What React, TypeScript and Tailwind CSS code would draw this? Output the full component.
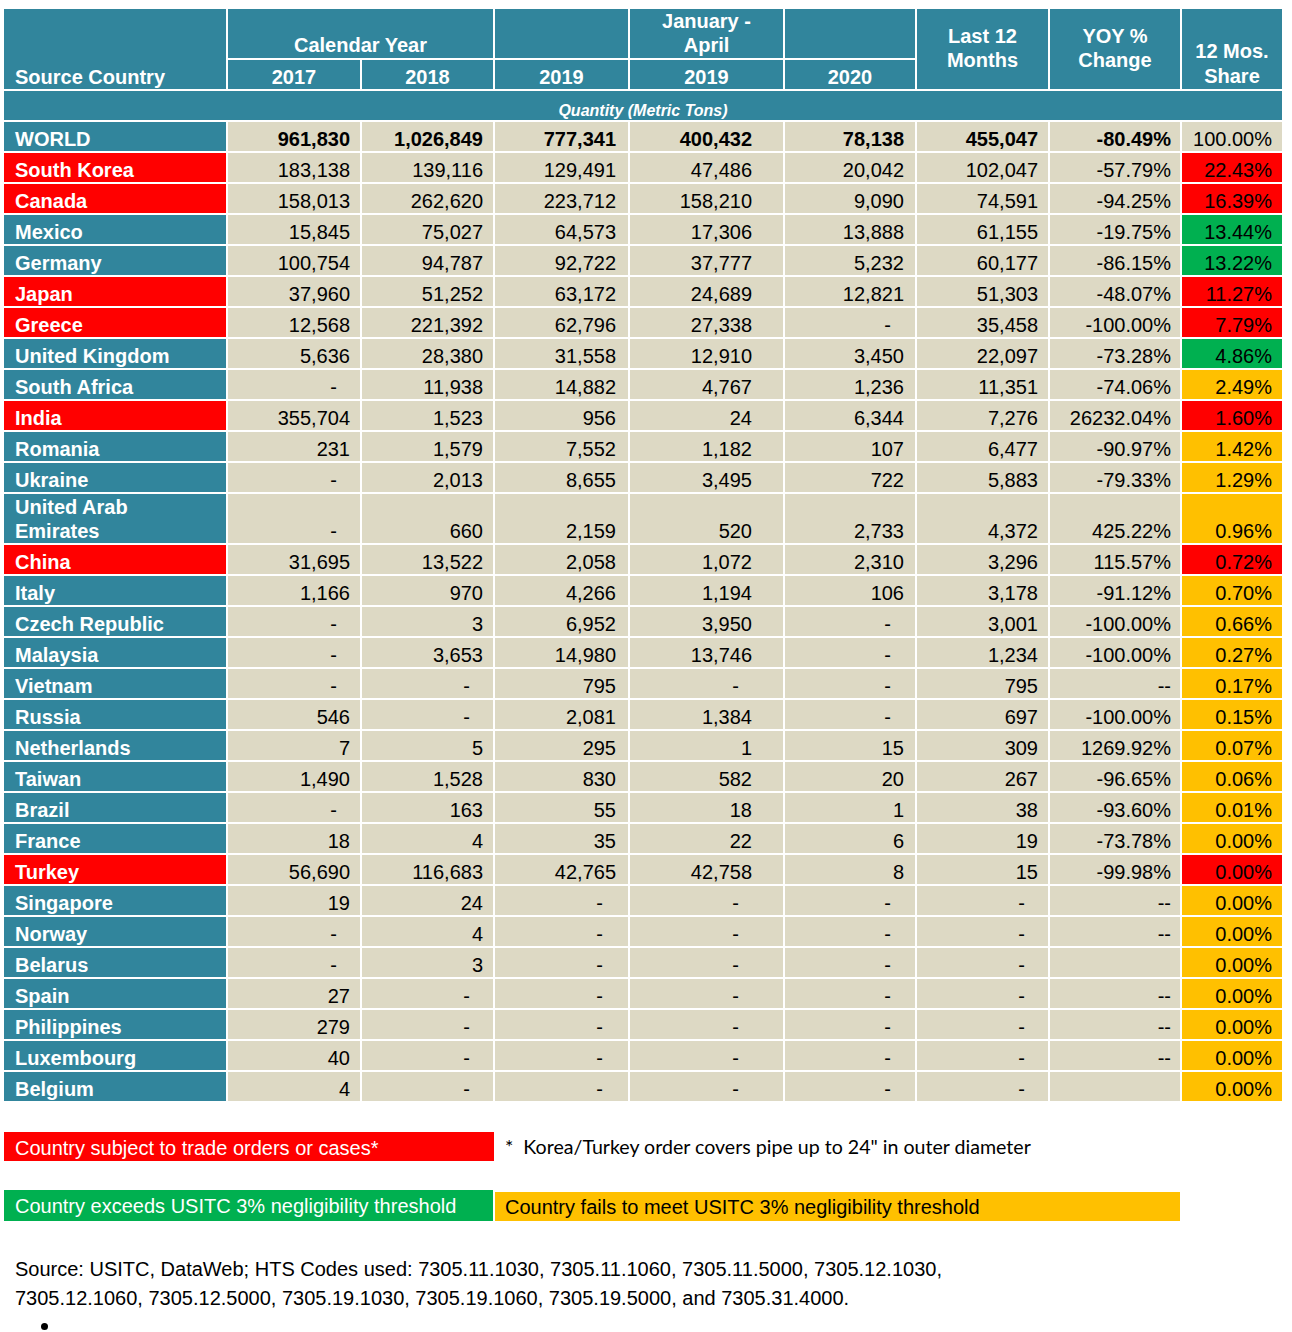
type ShareColor = 'red' | 'green' | 'orange' | 'none';

interface Row {
  name: string;
  red?: boolean;
  vals: string[];
  share: string;
  shareColor: ShareColor;
  tall?: boolean;
  bold?: boolean;
}

const rows: Row[] = [
  { name: 'WORLD', bold: true, vals: ['961,830', '1,026,849', '777,341', '400,432', '78,138', '455,047', '-80.49%'], share: '100.00%', shareColor: 'none' },
  { name: 'South Korea', red: true, vals: ['183,138', '139,116', '129,491', '47,486', '20,042', '102,047', '-57.79%'], share: '22.43%', shareColor: 'red' },
  { name: 'Canada', red: true, vals: ['158,013', '262,620', '223,712', '158,210', '9,090', '74,591', '-94.25%'], share: '16.39%', shareColor: 'red' },
  { name: 'Mexico', vals: ['15,845', '75,027', '64,573', '17,306', '13,888', '61,155', '-19.75%'], share: '13.44%', shareColor: 'green' },
  { name: 'Germany', vals: ['100,754', '94,787', '92,722', '37,777', '5,232', '60,177', '-86.15%'], share: '13.22%', shareColor: 'green' },
  { name: 'Japan', red: true, vals: ['37,960', '51,252', '63,172', '24,689', '12,821', '51,303', '-48.07%'], share: '11.27%', shareColor: 'red' },
  { name: 'Greece', red: true, vals: ['12,568', '221,392', '62,796', '27,338', '-', '35,458', '-100.00%'], share: '7.79%', shareColor: 'red' },
  { name: 'United Kingdom', vals: ['5,636', '28,380', '31,558', '12,910', '3,450', '22,097', '-73.28%'], share: '4.86%', shareColor: 'green' },
  { name: 'South Africa', vals: ['-', '11,938', '14,882', '4,767', '1,236', '11,351', '-74.06%'], share: '2.49%', shareColor: 'orange' },
  { name: 'India', red: true, vals: ['355,704', '1,523', '956', '24', '6,344', '7,276', '26232.04%'], share: '1.60%', shareColor: 'red' },
  { name: 'Romania', vals: ['231', '1,579', '7,552', '1,182', '107', '6,477', '-90.97%'], share: '1.42%', shareColor: 'orange' },
  { name: 'Ukraine', vals: ['-', '2,013', '8,655', '3,495', '722', '5,883', '-79.33%'], share: '1.29%', shareColor: 'orange' },
  { name: 'United Arab|Emirates', tall: true, vals: ['-', '660', '2,159', '520', '2,733', '4,372', '425.22%'], share: '0.96%', shareColor: 'orange' },
  { name: 'China', red: true, vals: ['31,695', '13,522', '2,058', '1,072', '2,310', '3,296', '115.57%'], share: '0.72%', shareColor: 'red' },
  { name: 'Italy', vals: ['1,166', '970', '4,266', '1,194', '106', '3,178', '-91.12%'], share: '0.70%', shareColor: 'orange' },
  { name: 'Czech Republic', vals: ['-', '3', '6,952', '3,950', '-', '3,001', '-100.00%'], share: '0.66%', shareColor: 'orange' },
  { name: 'Malaysia', vals: ['-', '3,653', '14,980', '13,746', '-', '1,234', '-100.00%'], share: '0.27%', shareColor: 'orange' },
  { name: 'Vietnam', vals: ['-', '-', '795', '-', '-', '795', '--'], share: '0.17%', shareColor: 'orange' },
  { name: 'Russia', vals: ['546', '-', '2,081', '1,384', '-', '697', '-100.00%'], share: '0.15%', shareColor: 'orange' },
  { name: 'Netherlands', vals: ['7', '5', '295', '1', '15', '309', '1269.92%'], share: '0.07%', shareColor: 'orange' },
  { name: 'Taiwan', vals: ['1,490', '1,528', '830', '582', '20', '267', '-96.65%'], share: '0.06%', shareColor: 'orange' },
  { name: 'Brazil', vals: ['-', '163', '55', '18', '1', '38', '-93.60%'], share: '0.01%', shareColor: 'orange' },
  { name: 'France', vals: ['18', '4', '35', '22', '6', '19', '-73.78%'], share: '0.00%', shareColor: 'orange' },
  { name: 'Turkey', red: true, vals: ['56,690', '116,683', '42,765', '42,758', '8', '15', '-99.98%'], share: '0.00%', shareColor: 'red' },
  { name: 'Singapore', vals: ['19', '24', '-', '-', '-', '-', '--'], share: '0.00%', shareColor: 'orange' },
  { name: 'Norway', vals: ['-', '4', '-', '-', '-', '-', '--'], share: '0.00%', shareColor: 'orange' },
  { name: 'Belarus', vals: ['-', '3', '-', '-', '-', '-', ''], share: '0.00%', shareColor: 'orange' },
  { name: 'Spain', vals: ['27', '-', '-', '-', '-', '-', '--'], share: '0.00%', shareColor: 'orange' },
  { name: 'Philippines', vals: ['279', '-', '-', '-', '-', '-', '--'], share: '0.00%', shareColor: 'orange' },
  { name: 'Luxembourg', vals: ['40', '-', '-', '-', '-', '-', '--'], share: '0.00%', shareColor: 'orange' },
  { name: 'Belgium', vals: ['4', '-', '-', '-', '-', '-', ''], share: '0.00%', shareColor: 'orange' },
];

// right padding per value column, taken from the sheet
const padRight = ['pr-[10px]', 'pr-[10px]', 'pr-[12px]', 'pr-[31px]', 'pr-[11px]', 'pr-[10px]', 'pr-[9px]'];

const shareBg: Record<ShareColor, string> = {
  red: 'bg-[#ff0000]',
  green: 'bg-[#00b050]',
  orange: 'bg-[#ffc000]',
  none: 'bg-[#ddd9c4]',
};

const teal = 'bg-[#31859c]';

function Value({ v }: { v: string }) {
  if (v === '-') return <span className="mr-[13px]">-</span>;
  return <span>{v}</span>;
}

function DataRow({ row }: { row: Row }) {
  const h = row.tall ? 'h-[49px]' : 'h-[29px]';
  const lines = row.name.split('|');
  return (
    <>
      <div
        className={`${h} ${row.red ? 'bg-[#ff0000]' : teal} flex items-end pl-[11px] font-bold text-white ${
          row.tall ? 'leading-[24px] pb-0' : 'leading-[20px] pb-[2px]'
        }`}
      >
        <div>
          {lines.map((l, i) => (
            <div key={i}>{l}</div>
          ))}
        </div>
      </div>
      {row.vals.map((v, i) => (
        <div
          key={i}
          className={`${h} bg-[#ddd9c4] flex items-end justify-end pb-[2px] leading-[20px] text-black ${padRight[i]} ${
            row.bold ? 'font-bold' : ''
          }`}
        >
          <Value v={v} />
        </div>
      ))}
      <div className={`${h} ${shareBg[row.shareColor]} flex items-end justify-end pr-[10px] pb-[2px] leading-[20px] text-black`}>
        {row.share}
      </div>
    </>
  );
}

export default function App() {
  return (
    <div className="bg-white w-[1292px] min-h-[1332px] pt-[9px] pl-[4px] font-['Liberation_Sans',Arial,sans-serif] text-[20px]">
      <div className="grid grid-cols-[222px_132px_131px_133px_153px_130px_131px_130px_100px] grid-rows-[49px_29px] gap-[2px] w-[1278px]">
        <div className={`${teal} row-span-2 flex items-end pl-[11px] pb-[2px] leading-[20px] font-bold text-white`}>
          Source Country
        </div>
        <div className={`${teal} col-span-2 flex items-end justify-center pb-[3px] leading-[20px] font-bold text-white`}>
          Calendar Year
        </div>
        <div className={teal} />
        <div className={`${teal} flex items-end justify-center pb-[1px] leading-[24px] font-bold text-white text-center`}>
          <div>
            January -
            <br />
            April
          </div>
        </div>
        <div className={teal} />
        <div className={`${teal} row-span-2 flex items-center justify-center pb-[2px] leading-[24px] font-bold text-white text-center`}>
          <div>
            Last 12
            <br />
            Months
          </div>
        </div>
        <div className={`${teal} row-span-2 flex items-center justify-center pb-[2px] leading-[24px] font-bold text-white text-center`}>
          <div>
            YOY %
            <br />
            Change
          </div>
        </div>
        <div className={`${teal} row-span-2 flex items-end justify-center pb-0 leading-[25px] font-bold text-white text-center`}>
          <div>
            12 Mos.
            <br />
            Share
          </div>
        </div>
        {['2017', '2018', '2019', '2019', '2020'].map((y, i) => (
          <div key={i} className={`${teal} flex items-end justify-center pb-[2px] leading-[20px] font-bold text-white`}>
            {y}
          </div>
        ))}
        <div className={`${teal} col-span-9 h-[29px] flex items-end justify-center pb-0 leading-[18px] text-[16px] font-bold italic text-white`}>
          Quantity (Metric Tons)
        </div>
        {rows.map((r) => (
          <DataRow key={r.name} row={r} />
        ))}
      </div>

      <div className="mt-[31px] flex items-center">
        <div className="w-[490px] h-[29px] bg-[#ff0000] flex items-end pl-[11px] pb-[3px] leading-[20px] text-white">
          Country subject to trade orders or cases*
        </div>
        <div className="ml-[11px] text-[19.6px] leading-[22px] text-black font-['Lato','Open_Sans',sans-serif] whitespace-pre">
          {'*  Korea/Turkey order covers pipe up to 24" in outer diameter'}
        </div>
      </div>

      <div className="mt-[29px] flex items-end gap-[2px]">
        <div className="w-[489px] h-[31px] bg-[#00b050] flex items-end pl-[11px] pb-[5px] leading-[20px] text-white">
          Country exceeds USITC 3% negligibility threshold
        </div>
        <div className="w-[685px] h-[29px] bg-[#ffc000] flex items-end pl-[10px] pb-[4px] leading-[20px] text-black">
          Country fails to meet USITC 3% negligibility threshold
        </div>
      </div>

      <div className="mt-[34px] pl-[11px] leading-[29px] text-black">
        Source: USITC, DataWeb; HTS Codes used: 7305.11.1030, 7305.11.1060, 7305.11.5000, 7305.12.1030,
        <br />
        7305.12.1060, 7305.12.5000, 7305.19.1030, 7305.19.1060, 7305.19.5000, and 7305.31.4000.
      </div>
      <div className="ml-[37px] mt-[10px] w-[7px] h-[7px] rounded-full bg-black" />
    </div>
  );
}
